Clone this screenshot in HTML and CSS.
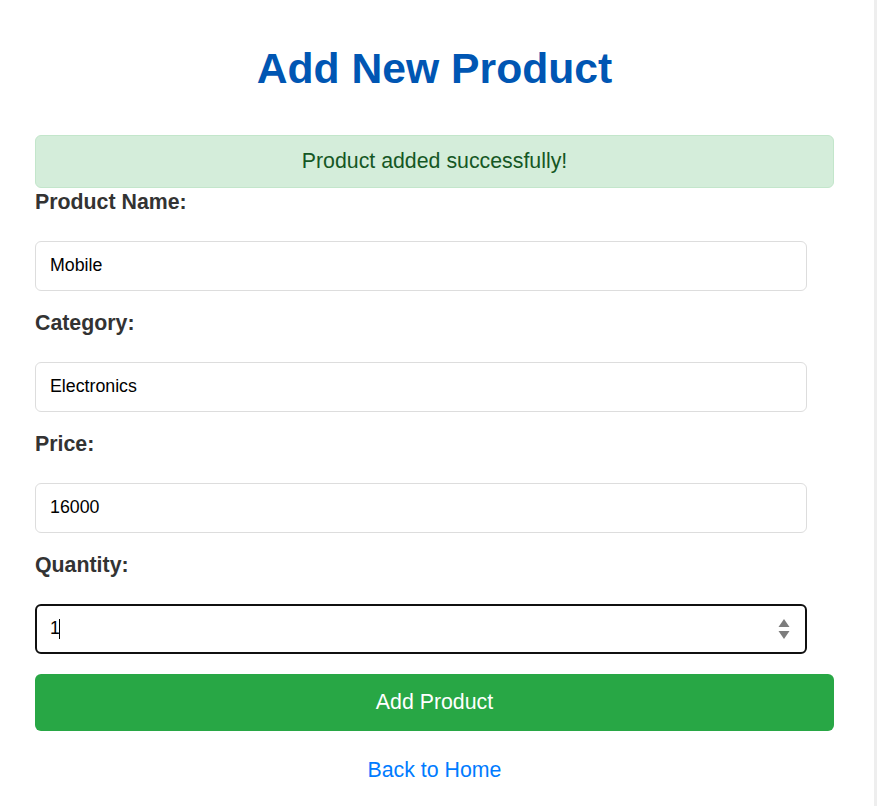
FILE: index.html
```html
<!DOCTYPE html>
<html lang="en">
<head>
<meta charset="utf-8">
<title>Add New Product</title>
<link rel="stylesheet" href="styles.css">
</head>
<body>
<div class="page">
  <h2 class="title">Add New Product</h2>
  <div class="alert">Product added successfully!</div>
  <form class="form">
    <label class="label" for="name">Product Name:</label>
    <input class="field" id="name" type="text" value="Mobile">
    <label class="label" for="category">Category:</label>
    <input class="field" id="category" type="text" value="Electronics">
    <label class="label" for="price">Price:</label>
    <input class="field" id="price" type="text" value="16000">
    <label class="label" for="qty">Quantity:</label>
    <div class="field-wrap">
      <input class="field focused" id="qty" type="text" value="1">
      <span class="caret"></span>
      <svg class="spinner" width="12" height="22" viewBox="0 0 12 22">
        <path d="M6 1 L11.5 9 L0.5 9 Z" fill="#7d7d7d"/>
        <path d="M0.5 13 L11.5 13 L6 21 Z" fill="#7d7d7d"/>
      </svg>
    </div>
    <button class="btn" type="button">Add Product</button>
  </form>
  <div class="back"><a class="back-link" href="#">Back to Home</a></div>
</div>
</body>
</html>
```
FILE: styles.css
```css
html, body {
  margin: 0;
  padding: 0;
}
body {
  background: #eeeeee;
  font-family: "Liberation Sans", Arial, sans-serif;
}
.page {
  width: 874px;
  min-height: 806px;
  background: #ffffff;
  padding: 44px 0 0 35px;
  box-sizing: border-box;
}
.title {
  width: 799px;
  margin: 0 0 42px;
  text-align: center;
  font-size: 42.67px;
  font-weight: bold;
  color: #0056b3;
  line-height: 49px;
}
.alert {
  width: 799px;
  box-sizing: border-box;
  height: 53px;
  margin-bottom: 1.5px;
  display: flex;
  align-items: center;
  justify-content: center;
  background: #d4edda;
  border: 1px solid #c3e6cb;
  border-radius: 6px;
  color: #155724;
  font-size: 21.33px;
}
.form {
  display: flex;
  flex-direction: column;
  width: 799px;
  margin: 0;
}
.label {
  display: block;
  font-size: 21.33px;
  line-height: 24.5px;
  font-weight: bold;
  color: #333333;
  margin: 0 0 7px;
}
.field {
  display: block;
  width: 772px;
  height: 49.5px;
  box-sizing: border-box;
  margin: 20px 0 20px;
  padding: 0 14px;
  border: 1px solid #dddddd;
  border-radius: 6px;
  font-family: "Liberation Sans", Arial, sans-serif;
  font-size: 17.78px;
  color: #000000;
  background: #ffffff;
  outline: none;
}
.field-wrap {
  position: relative;
  width: 772px;
  margin: 20px 0 20px;
}
.field-wrap .field {
  margin: 0;
}
.field.focused {
  border: 2px solid #101010;
  padding: 0 13px;
}
.caret {
  position: absolute;
  left: 24px;
  top: 15px;
  width: 1px;
  height: 20px;
  background: #000000;
}
.spinner {
  position: absolute;
  left: 743px;
  top: 13.5px;
}
.btn {
  display: block;
  width: 799px;
  height: 57px;
  border: none;
  border-radius: 6px;
  background: #28a745;
  color: #ffffff;
  font-family: "Liberation Sans", Arial, sans-serif;
  font-size: 21.33px;
  padding: 0;
  cursor: pointer;
}
.back {
  width: 799px;
  text-align: center;
  margin-top: 27px;
  font-size: 21.33px;
  line-height: 24.5px;
}
.back-link {
  color: #007bff;
  text-decoration: none;
}
```
